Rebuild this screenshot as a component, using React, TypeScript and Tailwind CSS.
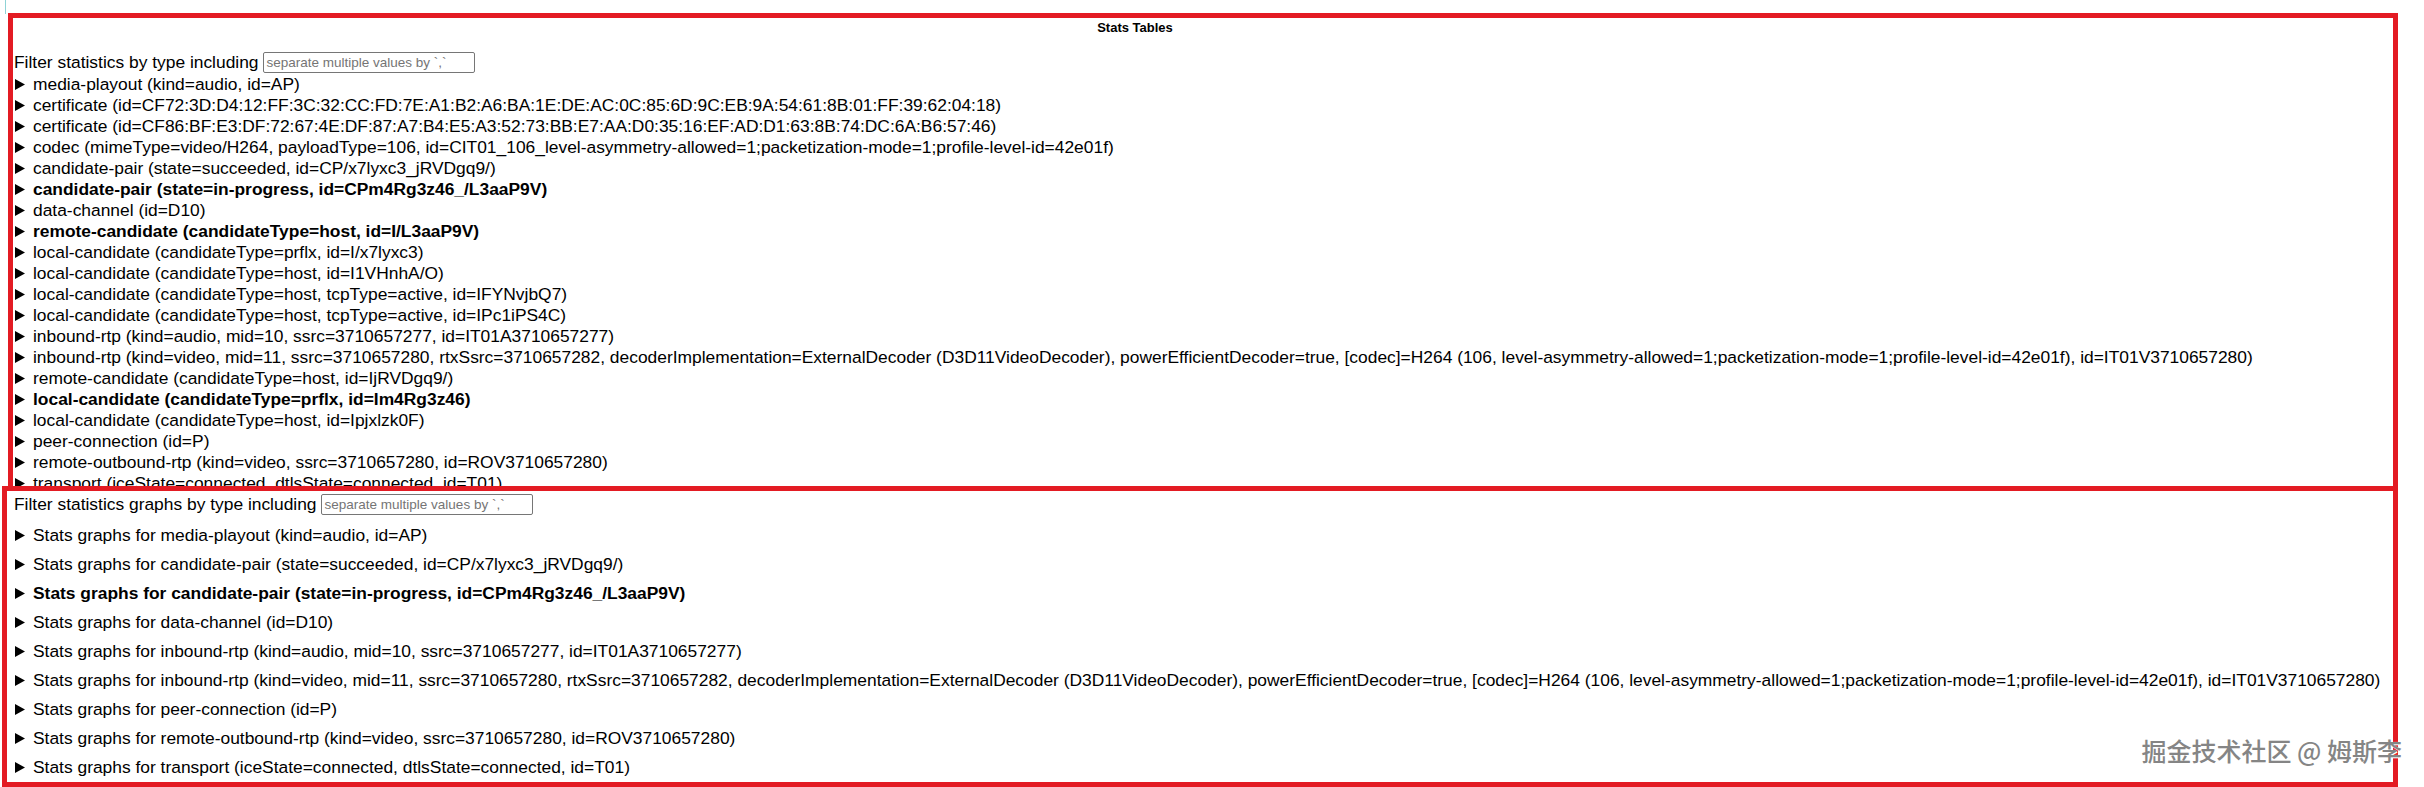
import React from "react";

type Row = { t: string; b?: boolean };

const LONG =
  "inbound-rtp (kind=video, mid=11, ssrc=3710657280, rtxSsrc=3710657282, decoderImplementation=ExternalDecoder (D3D11VideoDecoder), powerEfficientDecoder=true, [codec]=H264 (106, level-asymmetry-allowed=1;packetization-mode=1;profile-level-id=42e01f), id=IT01V3710657280)";

const tableRows: Row[] = [
  { t: "media-playout (kind=audio, id=AP)" },
  { t: "certificate (id=CF72:3D:D4:12:FF:3C:32:CC:FD:7E:A1:B2:A6:BA:1E:DE:AC:0C:85:6D:9C:EB:9A:54:61:8B:01:FF:39:62:04:18)" },
  { t: "certificate (id=CF86:BF:E3:DF:72:67:4E:DF:87:A7:B4:E5:A3:52:73:BB:E7:AA:D0:35:16:EF:AD:D1:63:8B:74:DC:6A:B6:57:46)" },
  { t: "codec (mimeType=video/H264, payloadType=106, id=CIT01_106_level-asymmetry-allowed=1;packetization-mode=1;profile-level-id=42e01f)" },
  { t: "candidate-pair (state=succeeded, id=CP/x7lyxc3_jRVDgq9/)" },
  { t: "candidate-pair (state=in-progress, id=CPm4Rg3z46_/L3aaP9V)", b: true },
  { t: "data-channel (id=D10)" },
  { t: "remote-candidate (candidateType=host, id=I/L3aaP9V)", b: true },
  { t: "local-candidate (candidateType=prflx, id=I/x7lyxc3)" },
  { t: "local-candidate (candidateType=host, id=I1VHnhA/O)" },
  { t: "local-candidate (candidateType=host, tcpType=active, id=IFYNvjbQ7)" },
  { t: "local-candidate (candidateType=host, tcpType=active, id=IPc1iPS4C)" },
  { t: "inbound-rtp (kind=audio, mid=10, ssrc=3710657277, id=IT01A3710657277)" },
  { t: LONG },
  { t: "remote-candidate (candidateType=host, id=IjRVDgq9/)" },
  { t: "local-candidate (candidateType=prflx, id=Im4Rg3z46)", b: true },
  { t: "local-candidate (candidateType=host, id=Ipjxlzk0F)" },
  { t: "peer-connection (id=P)" },
  { t: "remote-outbound-rtp (kind=video, ssrc=3710657280, id=ROV3710657280)" },
  { t: "transport (iceState=connected, dtlsState=connected, id=T01)" },
];

const graphRows: Row[] = [
  { t: "media-playout (kind=audio, id=AP)" },
  { t: "candidate-pair (state=succeeded, id=CP/x7lyxc3_jRVDgq9/)" },
  { t: "candidate-pair (state=in-progress, id=CPm4Rg3z46_/L3aaP9V)", b: true },
  { t: "data-channel (id=D10)" },
  { t: "inbound-rtp (kind=audio, mid=10, ssrc=3710657277, id=IT01A3710657277)" },
  { t: LONG },
  { t: "peer-connection (id=P)" },
  { t: "remote-outbound-rtp (kind=video, ssrc=3710657280, id=ROV3710657280)" },
  { t: "transport (iceState=connected, dtlsState=connected, id=T01)" },
];

function Tri() {
  return (
    <svg width="10" height="11" viewBox="0 0 10 11" className="shrink-0 ml-[1px]">
      <polygon points="0,0 10,5.5 0,11" fill="#000" />
    </svg>
  );
}

function Filter({ label }: { label: string }) {
  return (
    <div className="flex items-center h-[21px] whitespace-nowrap">
      <span>{label}</span>
      <div className="ml-[4px] w-[212px] h-[21px] border border-[#767676] rounded-[2px] flex items-center px-[3px] text-[13.5px] text-[#757575] leading-none">
        separate multiple values by `,`
      </div>
    </div>
  );
}

export default function App() {
  return (
    <div
      className="relative w-[2424px] h-[787px] bg-white overflow-hidden text-black text-[17.4px]"
      style={{ fontFamily: '"Liberation Sans", Arial, sans-serif' }}
    >
      <div className="absolute left-[5px] top-0 w-px h-[14px] bg-[#8fd3d6]" />

      {/* Stats Tables box */}
      <div className="ml-[8px] mt-[13px] w-[2390px] h-[478px] border-[5px] border-[#e31b23] overflow-hidden">
        <div className="w-[2244px] text-center text-[13px] font-bold h-[20px] leading-[20px]">Stats Tables</div>
        <div className="mt-[14px] pl-[1px]">
          <Filter label="Filter statistics by type including" />
        </div>
        <div className="pl-[1px] pt-[1px]">
          {tableRows.map((r, i) => (
            <div key={i} className="flex items-center h-[21px] whitespace-nowrap">
              <Tri />
              <span className={"ml-[8px] " + (r.b ? "font-bold" : "")}>{r.t}</span>
            </div>
          ))}
        </div>
      </div>

      {/* Stats graphs box */}
      <div className="ml-[2px] -mt-[5px] w-[2396px] h-[301px] border-[5px] border-[#e31b23] overflow-hidden relative">
        <div className="pl-[7px] mt-[3px]">
          <Filter label="Filter statistics graphs by type including" />
        </div>
        <div className="pl-[7px] mt-[6px]">
          {graphRows.map((r, i) => (
            <div key={i} className="flex items-center h-[29px] whitespace-nowrap">
              <Tri />
              <span className={"ml-[8px] " + (r.b ? "font-bold" : "")}>
                Stats graphs for {r.t}
              </span>
            </div>
          ))}
        </div>
      </div>

      <div
        className="absolute right-[22px] top-[738px] text-[25px] leading-none font-medium text-[#858585] whitespace-nowrap"
        style={{
          fontFamily: '"Noto Sans CJK SC", "Liberation Sans", sans-serif',
          textShadow: "0 0 1px #fff, 1px 1px 0 #fff",
        }}
      >
        掘金技术社区 @ 姆斯李
      </div>
    </div>
  );
}
